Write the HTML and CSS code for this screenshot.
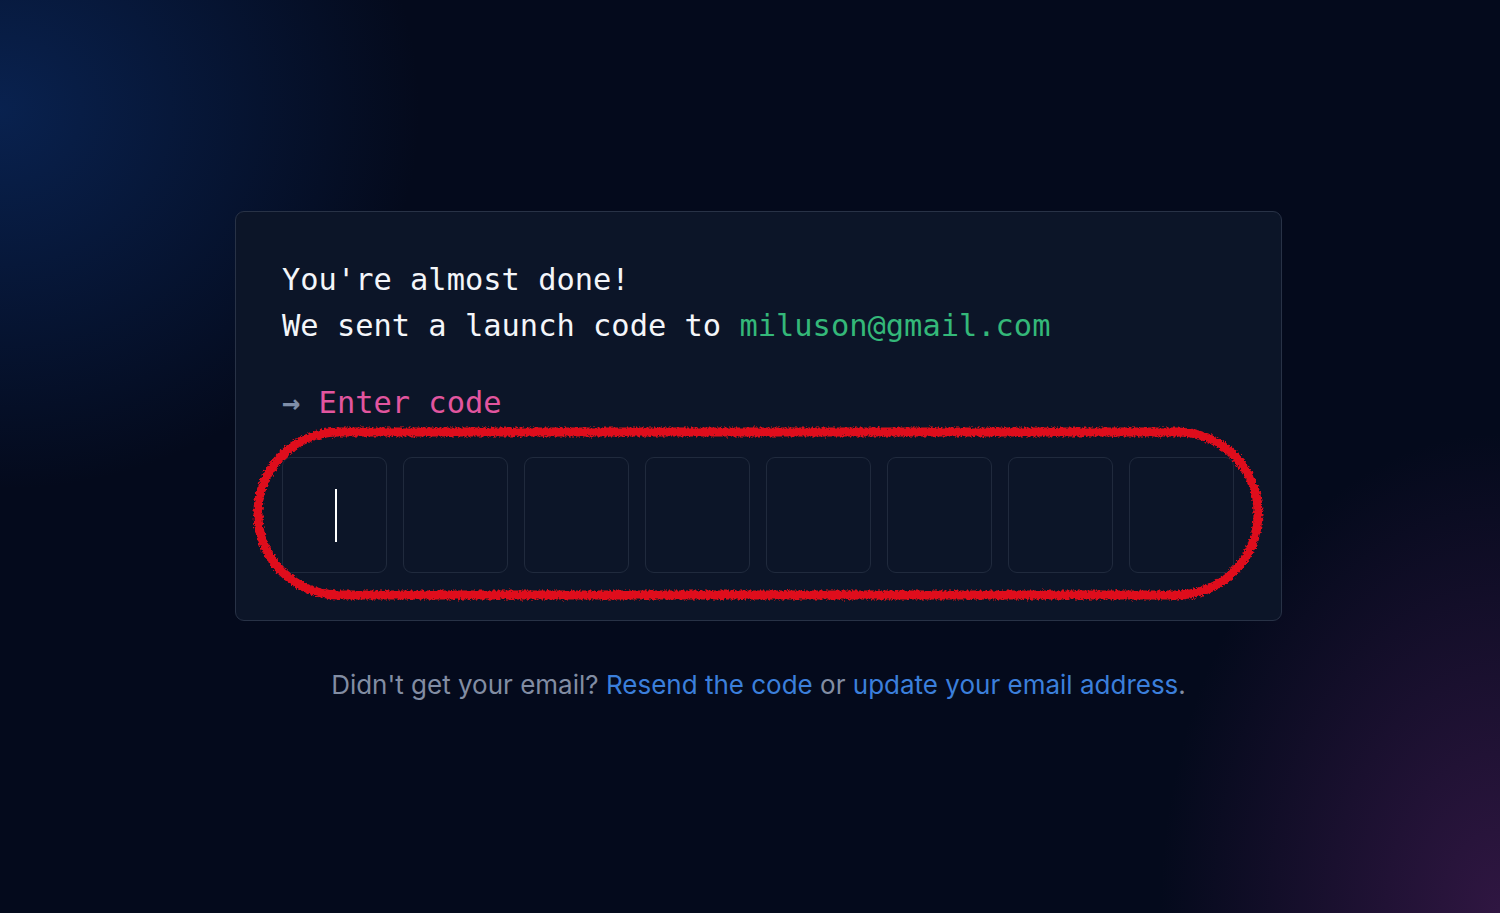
FILE: index.html
```html
<!DOCTYPE html>
<html lang="en">
<head>
<meta charset="utf-8">
<title>Verify email</title>
<link rel="stylesheet" href="styles.css">
</head>
<body>
<main class="page">
  <section class="card">
    <p class="intro">You're almost done!<br>We sent a launch code to <span class="email">miluson@gmail.com</span></p>
    <p class="prompt"><span class="arrow">→</span> <span class="label">Enter code</span></p>
    <div class="code-wrap">
      <div class="code-row">
        <div class="box"><span class="caret"></span></div>
        <div class="box"></div>
        <div class="box"></div>
        <div class="box"></div>
        <div class="box"></div>
        <div class="box"></div>
        <div class="box"></div>
        <div class="box"></div>
      </div>
      <svg class="scribble" width="1018" height="181" viewBox="0 0 1018 181" aria-hidden="true">
        <defs>
          <filter id="rough" x="-5%" y="-10%" width="110%" height="120%">
            <feTurbulence type="fractalNoise" baseFrequency="0.45" numOctaves="3" seed="5" result="n"/>
            <feDisplacementMap in="SourceGraphic" in2="n" scale="5" xChannelSelector="R" yChannelSelector="G"/>
          </filter>
        </defs>
        <rect x="9" y="9" width="1000" height="163" rx="81" ry="81" fill="none" stroke="#df0f1d" stroke-width="9" filter="url(#rough)"/>
      </svg>
    </div>
  </section>
  <p class="footer">Didn't get your email? <a class="link" href="#">Resend the code</a> or <a class="link" href="#">update your email address</a>.</p>
</main>
</body>
</html>
```
FILE: styles.css
```css
html, body {
  margin: 0;
  padding: 0;
  height: 100%;
}
body {
  background:
    radial-gradient(ellipse 420px 380px at 0% 12%, rgba(12, 48, 110, 0.62), rgba(12, 48, 110, 0) 100%),
    radial-gradient(ellipse 340px 480px at 100% 100%, rgba(62, 26, 78, 0.75), rgba(62, 26, 78, 0) 100%),
    #040a1c;
  overflow: hidden;
}
.page {
  display: flex;
  flex-direction: column;
  align-items: center;
  padding-top: 211px;
  padding-left: 17px;
}
.card {
  box-sizing: border-box;
  width: 1047px;
  padding: 45px 46px 47px;
  background: #0c1528;
  border: 1px solid #283246;
  border-radius: 9px;
  font-family: "DejaVu Sans Mono", "Liberation Mono", monospace;
  font-size: 30.4px;
  line-height: 46px;
  color: #f4f6fa;
}
.intro {
  margin: 0;
}
.email {
  color: #34b879;
}
.prompt {
  margin: 31px 0 0;
}
.arrow {
  color: #7f8ea8;
  font-weight: bold;
}
.label {
  color: #e2559f;
}
.code-wrap {
  position: relative;
  margin-top: 31px;
}
.code-row {
  display: flex;
  gap: 16px;
}
.box {
  box-sizing: border-box;
  width: 105px;
  height: 116px;
  border: 1.5px solid #202a3d;
  border-radius: 9px;
  display: flex;
  align-items: center;
  padding-left: 52px;
}
.caret {
  display: block;
  width: 2px;
  height: 53px;
  background: #ffffff;
}
.scribble {
  position: absolute;
  left: -33px;
  top: -34px;
  pointer-events: none;
}
.footer {
  margin: 48px 0 0;
  font-family: "Inter", "Liberation Sans", sans-serif;
  font-size: 26px;
  color: #828da3;
}
.link {
  color: #3b7fdb;
  text-decoration: none;
}
```
